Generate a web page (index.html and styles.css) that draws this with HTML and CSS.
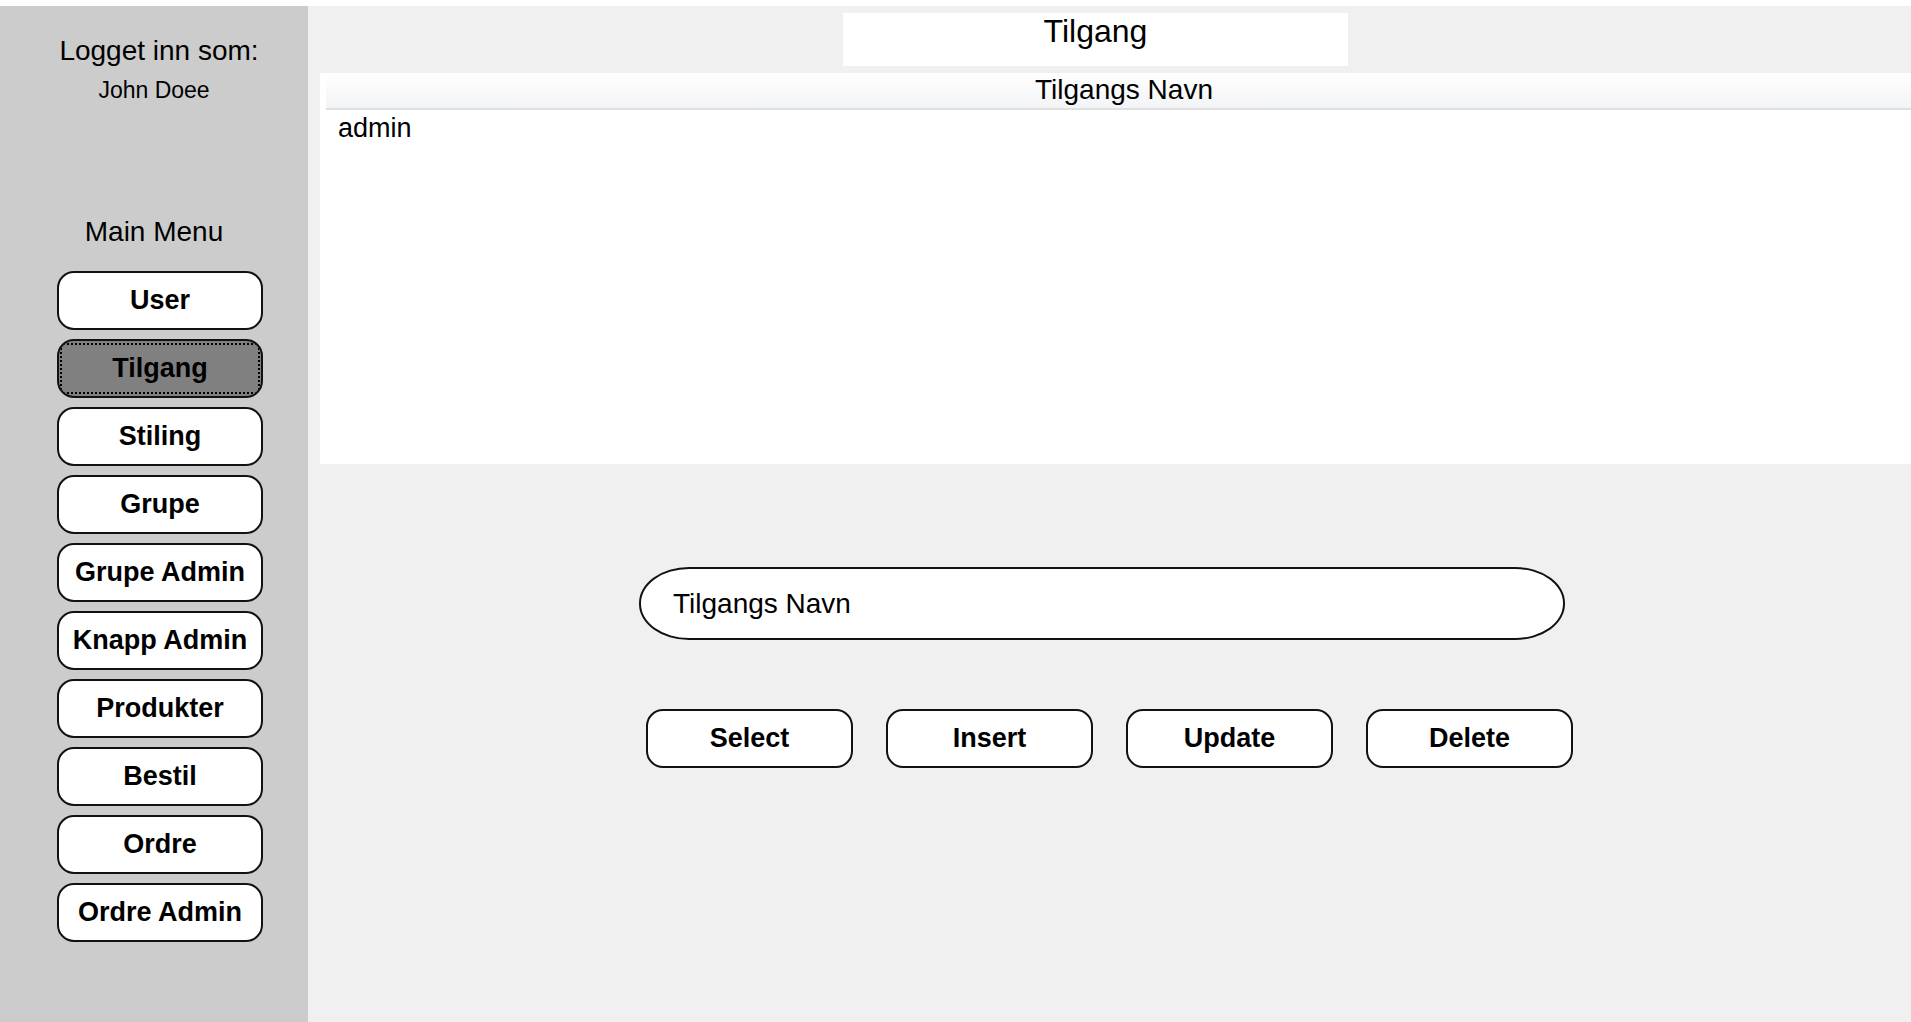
FILE: index.html
```html
<!DOCTYPE html>
<html lang="no">
<head>
<meta charset="utf-8">
<title>Tilgang</title>
<link rel="stylesheet" href="styles.css">
</head>
<body>
<div class="titlebar"></div>
<div class="app">
  <aside class="sidebar">
    <div class="login-label">Logget inn som:</div>
    <div class="login-user">John Doee</div>
    <div class="menu-title">Main Menu</div>
    <nav class="menu">
      <button class="menu-btn">User</button>
      <button class="menu-btn active">Tilgang</button>
      <button class="menu-btn">Stiling</button>
      <button class="menu-btn">Grupe</button>
      <button class="menu-btn">Grupe Admin</button>
      <button class="menu-btn">Knapp Admin</button>
      <button class="menu-btn">Produkter</button>
      <button class="menu-btn">Bestil</button>
      <button class="menu-btn">Ordre</button>
      <button class="menu-btn">Ordre Admin</button>
    </nav>
  </aside>
  <main class="content">
    <div class="page-title">Tilgang</div>
    <div class="grid">
      <div class="grid-head">Tilgangs Navn</div>
      <div class="grid-row">admin</div>
    </div>
    <div class="field">Tilgangs Navn</div>
    <div class="actions">
      <button class="action-btn">Select</button>
      <button class="action-btn">Insert</button>
      <button class="action-btn">Update</button>
      <button class="action-btn">Delete</button>
    </div>
  </main>
</div>
</body>
</html>
```
FILE: styles.css
```css
* { box-sizing: border-box; }
html, body { margin: 0; height: 100%; }
body {
  font-family: "Liberation Sans", Arial, sans-serif;
  background: #f0f0f0;
  color: #000;
  overflow: hidden;
}
.titlebar { height: 6px; background: #fff; }
.app { display: flex; height: calc(100vh - 6px); }

.sidebar {
  width: 308px;
  flex: none;
  background: #cccccc;
  display: flex;
  flex-direction: column;
  padding-top: 29px;
}
.login-label {
  font-size: 28px;
  line-height: 32px;
  text-align: center;
  padding-left: 10px;
}
.login-user {
  font-size: 23px;
  line-height: 28px;
  margin-top: 9px;
  text-align: center;
}
.menu-title {
  font-size: 28px;
  line-height: 32px;
  margin-top: 112px;
  text-align: center;
}
.menu {
  display: flex;
  flex-direction: column;
  gap: 9px;
  margin-top: 23px;
  padding-left: 57px;
}
.menu-btn, .action-btn {
  height: 59px;
  border: 2px solid #111;
  border-radius: 17px;
  background: #fff;
  color: #000;
  font-family: "Liberation Sans", Arial, sans-serif;
  font-weight: bold;
  font-size: 27px;
  padding: 0;
  position: relative;
  overflow: hidden;
}
.menu-btn { width: 206px; }
.menu-btn.active { background: #808080; }
.menu-btn.active::after {
  content: "";
  position: absolute;
  inset: 2px 1px;
  border: 2px dotted #000;
}

.content {
  flex: 1;
  min-width: 0;
  display: flex;
  flex-direction: column;
}
.page-title {
  margin: 7px 0 0 535px;
  width: 505px;
  height: 53px;
  background: #fff;
  font-size: 32px;
  line-height: 36px;
  text-align: center;
}
.grid {
  margin: 7px 0 0 12px;
  height: 391px;
  background: #fff;
  padding-left: 6px;
}
.grid-head {
  height: 37px;
  background: linear-gradient(#ffffff, #f3f4f6);
  border-bottom: 2px solid #e0e0e0;
  font-size: 28px;
  line-height: 33px;
  text-align: center;
  padding-left: 11px;
}
.grid-row {
  font-size: 27px;
  line-height: 32px;
  padding: 2px 0 0 12px;
}
.field {
  margin: 103px 0 0 331px;
  width: 926px;
  height: 73px;
  background: #fff;
  border: 2px solid #111;
  border-radius: 50px / 36px;
  font-size: 28px;
  padding-left: 32px;
  display: flex;
  align-items: center;
}
.actions {
  display: flex;
  gap: 33px;
  margin: 69px 0 0 338px;
}
.action-btn { width: 207px; }
```
